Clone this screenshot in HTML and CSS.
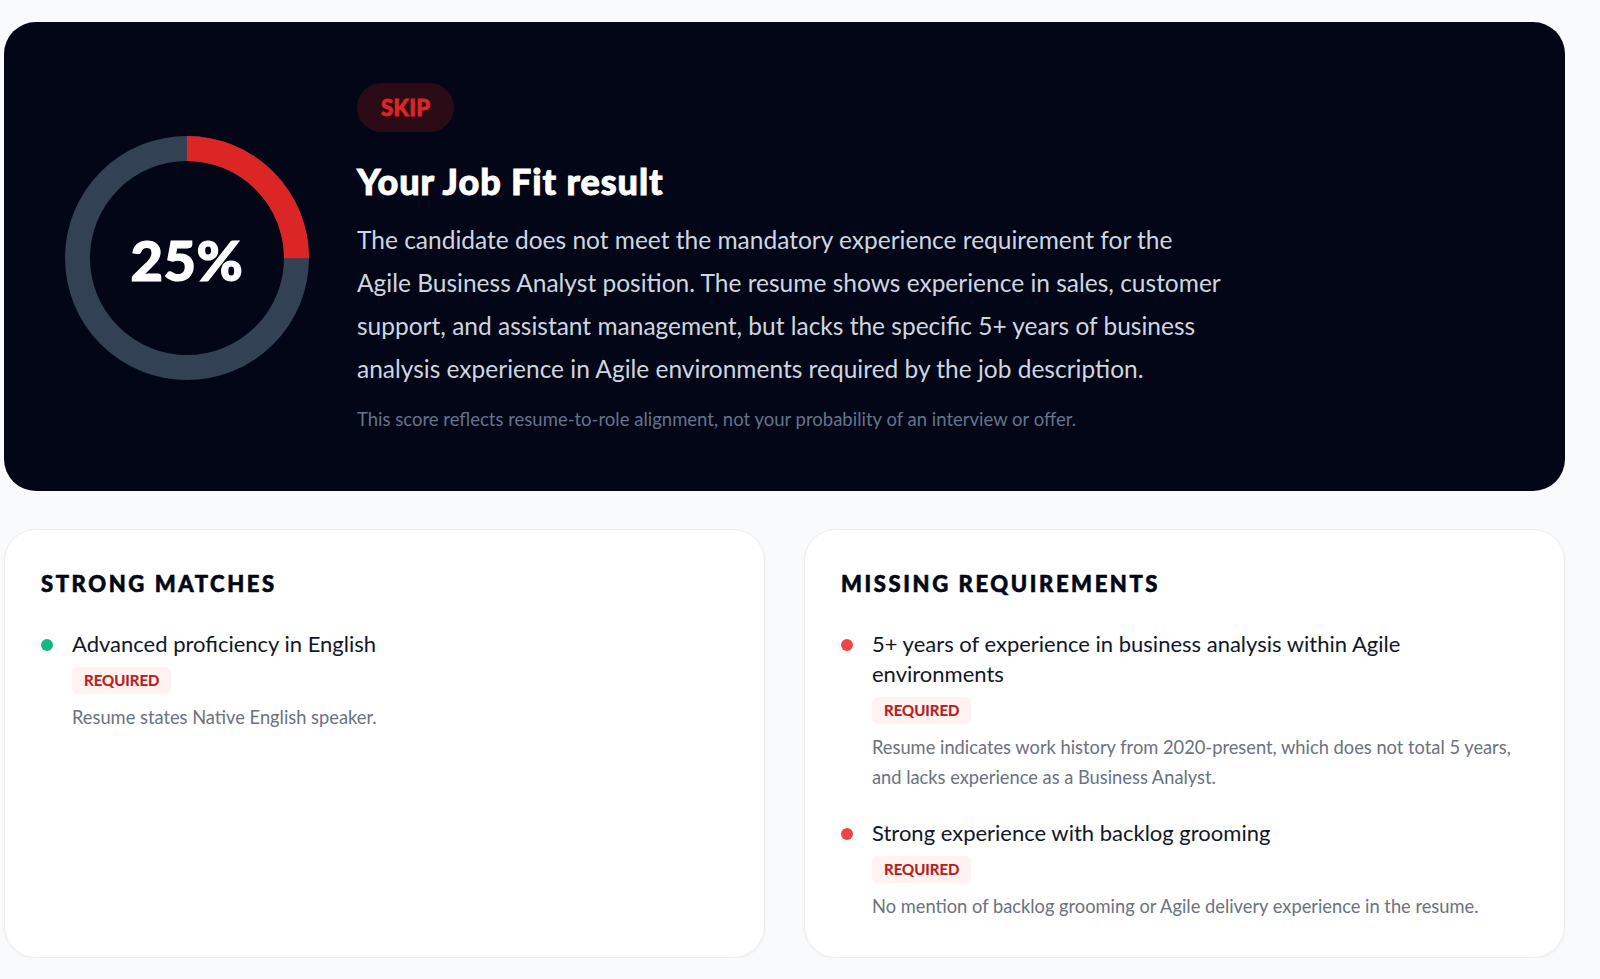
FILE: index.html
```html
<!DOCTYPE html>
<html lang="en">
<head>
<meta charset="utf-8">
<title>Your Job Fit result</title>
<link rel="stylesheet" href="styles.css">
</head>
<body>
<main class="page">
  <section class="hero">
    <div class="donut">
      <svg class="donut-svg" width="244" height="244" viewBox="0 0 244 244">
        <circle cx="122" cy="122" r="109.5" fill="none" stroke="#334155" stroke-width="25"/>
        <circle cx="122" cy="122" r="109.5" fill="none" stroke="#dc2626" stroke-width="25"
                stroke-dasharray="172 688" transform="rotate(-90 122 122)"/>
      </svg>
      <div class="donut-value">25%</div>
    </div>
    <div class="hero-text">
      <span class="pill">SKIP</span>
      <h1 class="hero-title">Your Job Fit result</h1>
      <p class="hero-desc">The candidate does not meet the mandatory experience requirement for the Agile Business Analyst position. The resume shows experience in sales, customer support, and assistant management, but lacks the specific 5+ years of business analysis experience in Agile environments required by the job description.</p>
      <p class="hero-note">This score reflects resume-to-role alignment, not your probability of an interview or offer.</p>
    </div>
  </section>

  <section class="cards">
    <div class="card">
      <h2 class="card-title">STRONG MATCHES</h2>
      <ul class="items">
        <li class="item">
          <span class="dot dot-green"></span>
          <div class="item-body">
            <div class="item-title">Advanced proficiency in English</div>
            <span class="badge">REQUIRED</span>
            <p class="item-desc">Resume states Native English speaker.</p>
          </div>
        </li>
      </ul>
    </div>
    <div class="card">
      <h2 class="card-title">MISSING REQUIREMENTS</h2>
      <ul class="items">
        <li class="item">
          <span class="dot dot-red"></span>
          <div class="item-body">
            <div class="item-title">5+ years of experience in business analysis within Agile environments</div>
            <span class="badge">REQUIRED</span>
            <p class="item-desc">Resume indicates work history from 2020-present, which does not total 5 years, and lacks experience as a Business Analyst.</p>
          </div>
        </li>
        <li class="item">
          <span class="dot dot-red"></span>
          <div class="item-body">
            <div class="item-title">Strong experience with backlog grooming</div>
            <span class="badge">REQUIRED</span>
            <p class="item-desc">No mention of backlog grooming or Agile delivery experience in the resume.</p>
          </div>
        </li>
      </ul>
    </div>
  </section>
</main>
</body>
</html>
```

FILE: styles.css
```css
* { box-sizing: border-box; }

html, body {
  margin: 0;
  padding: 0;
  background: #f8fafc;
  font-family: Lato, "Open Sans", "Noto Sans", sans-serif;
}

.page {
  width: 1565px;
  padding: 22px 0 0 4px;
}

.hero {
  display: flex;
  align-items: center;
  gap: 48px;
  background: #020617;
  border-radius: 32px;
  padding: 61px 61px 59px 61px;
  height: 469px;
}

.donut {
  display: grid;
  place-items: center;
  width: 244px;
  height: 244px;
  flex: 0 0 244px;
}

.donut-svg,
.donut-value {
  grid-area: 1 / 1;
}

.donut-value {
  color: #ffffff;
  font-weight: 900;
  font-size: 56px;
  line-height: 1;
  letter-spacing: 0.5px;
  -webkit-text-stroke: 1.2px #ffffff;
  padding-top: 4px;
}

.hero-text {
  display: flex;
  flex-direction: column;
  align-items: flex-start;
}

.pill {
  display: inline-block;
  height: 49px;
  line-height: 49px;
  padding: 0 24px;
  border-radius: 25px;
  background: #2a0b16;
  color: #dc2626;
  font-weight: 900;
  font-size: 22px;
  letter-spacing: 0.4px;
  -webkit-text-stroke: 0.8px #dc2626;
}

.hero-title {
  margin: 28px 0 0;
  color: #ffffff;
  font-size: 36px;
  font-weight: 900;
  line-height: 42px;
  letter-spacing: 0.9px;
  -webkit-text-stroke: 0.9px #ffffff;
}

.hero-desc {
  margin: 16px 0 0;
  max-width: 868px;
  color: #cfd6e0;
  font-size: 24.5px;
  line-height: 43px;
}

.hero-note {
  margin: 16px 0 0;
  color: #64748b;
  font-size: 18.5px;
  line-height: 26px;
}

.cards {
  display: grid;
  grid-template-columns: 761px 761px;
  gap: 39px;
  margin-top: 38px;
}

.card {
  background: #ffffff;
  border: 1px solid #eceef2;
  border-radius: 32px;
  padding: 41px 36px 37px 36px;
  box-shadow: 0 1px 3px rgba(15, 23, 42, 0.05);
  height: 429px;
}

.card-title {
  margin: 0;
  color: #020617;
  font-size: 22px;
  font-weight: 900;
  letter-spacing: 2.6px;
  line-height: 26px;
  -webkit-text-stroke: 0.6px #020617;
}

.items {
  list-style: none;
  margin: 32px 0 0;
  padding: 0;
  display: flex;
  flex-direction: column;
  gap: 26px;
}

.item {
  display: flex;
  align-items: flex-start;
  gap: 19px;
}

.dot {
  flex: 0 0 12px;
  width: 12px;
  height: 12px;
  border-radius: 50%;
  margin-top: 10px;
}

.dot-green { background: #10b981; }
.dot-red { background: #ef4444; }

.item-body {
  display: flex;
  flex-direction: column;
  align-items: flex-start;
}

.item-title {
  color: #0f172a;
  font-size: 22px;
  line-height: 30px;
}

.badge {
  margin-top: 8px;
  display: inline-block;
  height: 27px;
  line-height: 27px;
  padding: 0 12px;
  border-radius: 6px;
  background: #fef2f2;
  color: #b91c1c;
  font-size: 15px;
  font-weight: 700;
  -webkit-text-stroke: 0.2px #b91c1c;
}

.item-desc {
  margin: 8px 0 0;
  color: #6b7280;
  font-size: 18.3px;
  line-height: 30px;
}
```
